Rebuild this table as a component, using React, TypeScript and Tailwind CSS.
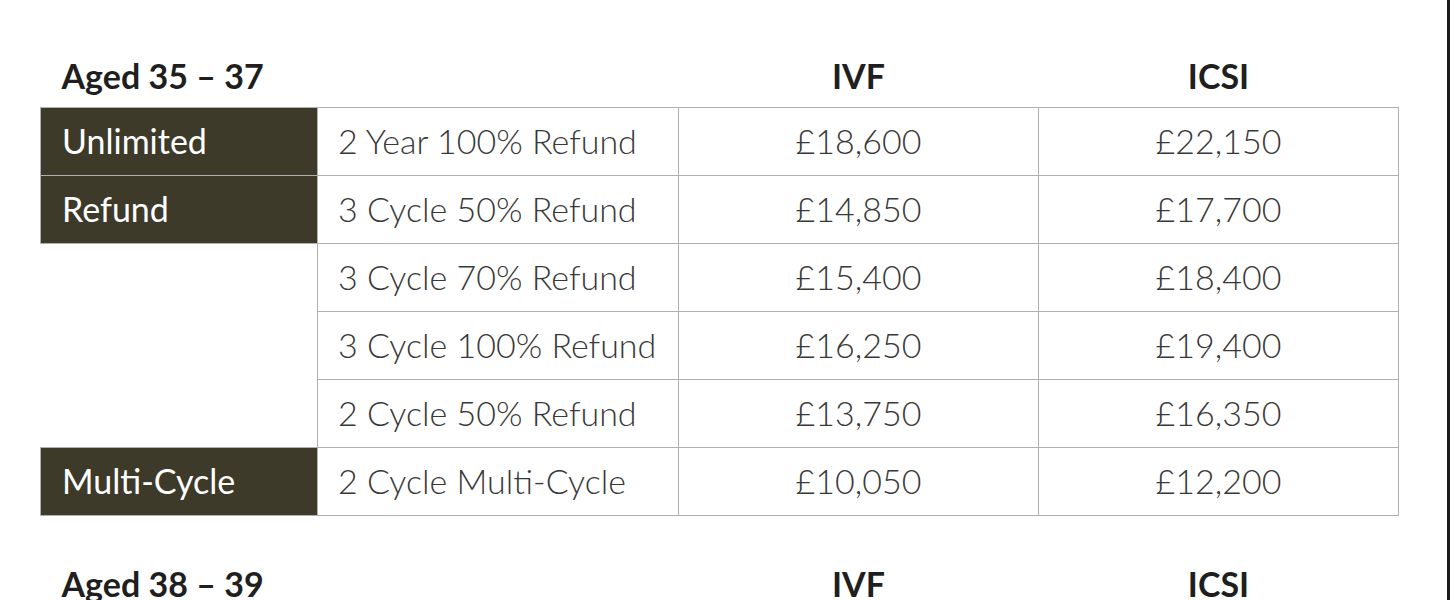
import React from 'react';

type Row = { group?: string; plan: string; ivf: string; icsi: string };

const rows3537: Row[] = [
  { group: 'Unlimited', plan: '2 Year 100% Refund', ivf: '£18,600', icsi: '£22,150' },
  { group: 'Refund', plan: '3 Cycle 50% Refund', ivf: '£14,850', icsi: '£17,700' },
  { plan: '3 Cycle 70% Refund', ivf: '£15,400', icsi: '£18,400' },
  { plan: '3 Cycle 100% Refund', ivf: '£16,250', icsi: '£19,400' },
  { plan: '2 Cycle 50% Refund', ivf: '£13,750', icsi: '£16,350' },
  { group: 'Multi-Cycle', plan: '2 Cycle Multi-Cycle', ivf: '£10,050', icsi: '£12,200' },
];

const rows3839: Row[] = [
  { group: 'Unlimited', plan: '2 Year 100% Refund', ivf: '£20,850', icsi: '£24,400' },
  { group: 'Refund', plan: '3 Cycle 50% Refund', ivf: '£16,650', icsi: '£19,500' },
];

function Colgroup() {
  return (
    <colgroup>
      <col className="w-[277px]" />
      <col className="w-[361px]" />
      <col className="w-[360px]" />
      <col className="w-[360px]" />
    </colgroup>
  );
}

function PriceTable({ title, rows }: { title: string; rows: Row[] }) {
  return (
    <div>
      <table className="w-[1358px] table-fixed border-collapse">
        <Colgroup />
        <thead>
          <tr className="h-[64px]">
            <th className="text-left align-bottom pb-[11px] pl-[21px] text-[34px] font-bold text-[#1f1f1f] leading-[40px]">{title}</th>
            <th />
            <th className="text-center align-bottom pb-[11px] text-[34px] font-bold text-[#1f1f1f] leading-[40px]">IVF</th>
            <th className="text-center align-bottom pb-[11px] text-[34px] font-bold text-[#1f1f1f] leading-[40px]">ICSI</th>
          </tr>
        </thead>
        <tbody>
          {rows.map((r, i) => (
            <tr key={i} className="h-[68px]">
              {r.group ? (
                <td className="border border-[#b0b0b0] bg-[#3d3a2a] text-white pl-[21px] text-[34px] leading-[40px] font-normal">{r.group}</td>
              ) : (
                <td />
              )}
              <td className="border border-[#b0b0b0] pl-[20px] text-[34px] leading-[40px] font-light text-[#383838]">{r.plan}</td>
              <td className="border border-[#b0b0b0] text-center text-[34px] leading-[40px] font-light text-[#383838]">{r.ivf}</td>
              <td className="border border-[#b0b0b0] text-center text-[34px] leading-[40px] font-light text-[#383838]">{r.icsi}</td>
            </tr>
          ))}
        </tbody>
      </table>
    </div>
  );
}

export default function App() {
  return (
    <div className="flex h-screen w-full overflow-hidden bg-white" style={{ fontFamily: 'Lato, "Open Sans", sans-serif' }}>
      <div className="flex-1 flex flex-col gap-[36px] pl-[40px] pt-[43px]">
        <PriceTable title="Aged 35 – 37" rows={rows3537} />
        <PriceTable title="Aged 38 – 39" rows={rows3839} />
      </div>
      <div className="w-[3px] h-full bg-[#1c1c1c]" />
    </div>
  );
}
